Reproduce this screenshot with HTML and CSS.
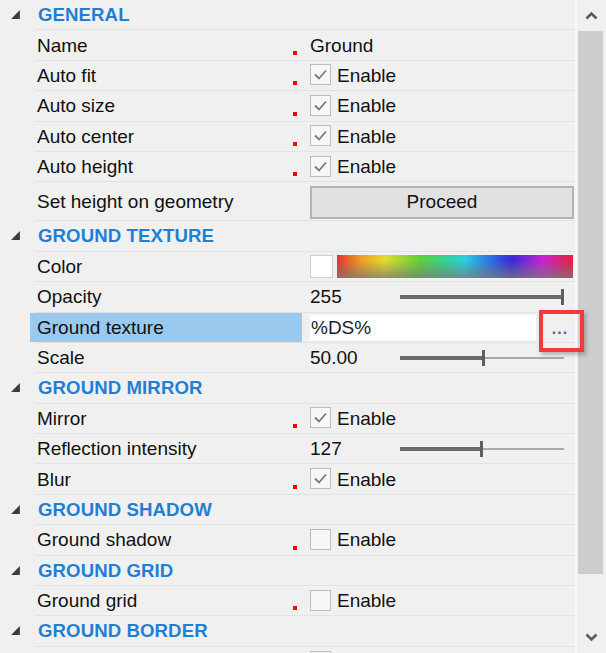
FILE: index.html
```html
<!DOCTYPE html>
<html>
<head>
<meta charset="utf-8">
<link rel="stylesheet" href="styles.css">
</head>
<body>
<div class="panel">
  <div class="content">
    <div class="row head"><div class="gutter"><svg class="tri" width="10" height="10" viewBox="0 0 10 10"><polygon points="9,1 9,9 1,9"/></svg></div><div class="cells"><span class="htext">GENERAL</span></div></div>
    <div class="row"><div class="gutter"></div><div class="cells"><div class="label"><span>Name</span><i class="mark"></i></div><div class="value">Ground</div></div></div>
    <div class="row"><div class="gutter"></div><div class="cells"><div class="label"><span>Auto fit</span><i class="mark"></i></div><div class="value"><span class="cb"><svg viewBox="0 0 21 21" width="21" height="21"><polyline points="5,10.5 9,14.5 16,6.5"/></svg></span><span class="cbl">Enable</span></div></div></div>
    <div class="row"><div class="gutter"></div><div class="cells"><div class="label"><span>Auto size</span><i class="mark"></i></div><div class="value"><span class="cb"><svg viewBox="0 0 21 21" width="21" height="21"><polyline points="5,10.5 9,14.5 16,6.5"/></svg></span><span class="cbl">Enable</span></div></div></div>
    <div class="row"><div class="gutter"></div><div class="cells"><div class="label"><span>Auto center</span><i class="mark"></i></div><div class="value"><span class="cb"><svg viewBox="0 0 21 21" width="21" height="21"><polyline points="5,10.5 9,14.5 16,6.5"/></svg></span><span class="cbl">Enable</span></div></div></div>
    <div class="row"><div class="gutter"></div><div class="cells"><div class="label"><span>Auto height</span><i class="mark"></i></div><div class="value"><span class="cb"><svg viewBox="0 0 21 21" width="21" height="21"><polyline points="5,10.5 9,14.5 16,6.5"/></svg></span><span class="cbl">Enable</span></div></div></div>
    <div class="row tall"><div class="gutter"></div><div class="cells"><div class="label"><span>Set height on geometry</span></div><div class="value"><button class="proceed">Proceed</button></div></div></div>

    <div class="row head"><div class="gutter"><svg class="tri" width="10" height="10" viewBox="0 0 10 10"><polygon points="9,1 9,9 1,9"/></svg></div><div class="cells"><span class="htext">GROUND TEXTURE</span></div></div>
    <div class="row"><div class="gutter"></div><div class="cells"><div class="label"><span>Color</span></div><div class="value"><span class="swatch"></span><span class="spectrum"></span></div></div></div>
    <div class="row"><div class="gutter"></div><div class="cells"><div class="label"><span>Opacity</span></div><div class="value"><span class="num">255</span><span class="slider"><span class="fill" style="width:161px"></span><span class="thumb"></span><span class="rest"></span></span></div></div></div>
    <div class="row"><div class="gutter"></div><div class="cells"><div class="label selected"><span>Ground texture</span></div><div class="value"><span class="textbox">%DS%</span><span class="browse">...<span class="callout"></span></span></div></div></div>
    <div class="row"><div class="gutter"></div><div class="cells"><div class="label"><span>Scale</span></div><div class="value"><span class="num">50.00</span><span class="slider"><span class="fill" style="width:82px"></span><span class="thumb"></span><span class="rest"></span></span></div></div></div>

    <div class="row head"><div class="gutter"><svg class="tri" width="10" height="10" viewBox="0 0 10 10"><polygon points="9,1 9,9 1,9"/></svg></div><div class="cells"><span class="htext">GROUND MIRROR</span></div></div>
    <div class="row"><div class="gutter"></div><div class="cells"><div class="label"><span>Mirror</span><i class="mark"></i></div><div class="value"><span class="cb"><svg viewBox="0 0 21 21" width="21" height="21"><polyline points="5,10.5 9,14.5 16,6.5"/></svg></span><span class="cbl">Enable</span></div></div></div>
    <div class="row"><div class="gutter"></div><div class="cells"><div class="label"><span>Reflection intensity</span></div><div class="value"><span class="num">127</span><span class="slider"><span class="fill" style="width:80px"></span><span class="thumb"></span><span class="rest"></span></span></div></div></div>
    <div class="row"><div class="gutter"></div><div class="cells"><div class="label"><span>Blur</span><i class="mark"></i></div><div class="value"><span class="cb"><svg viewBox="0 0 21 21" width="21" height="21"><polyline points="5,10.5 9,14.5 16,6.5"/></svg></span><span class="cbl">Enable</span></div></div></div>

    <div class="row head"><div class="gutter"><svg class="tri" width="10" height="10" viewBox="0 0 10 10"><polygon points="9,1 9,9 1,9"/></svg></div><div class="cells"><span class="htext">GROUND SHADOW</span></div></div>
    <div class="row"><div class="gutter"></div><div class="cells"><div class="label"><span>Ground shadow</span><i class="mark"></i></div><div class="value"><span class="cb"></span><span class="cbl">Enable</span></div></div></div>

    <div class="row head"><div class="gutter"><svg class="tri" width="10" height="10" viewBox="0 0 10 10"><polygon points="9,1 9,9 1,9"/></svg></div><div class="cells"><span class="htext">GROUND GRID</span></div></div>
    <div class="row"><div class="gutter"></div><div class="cells"><div class="label"><span>Ground grid</span><i class="mark"></i></div><div class="value"><span class="cb"></span><span class="cbl">Enable</span></div></div></div>

    <div class="row head"><div class="gutter"><svg class="tri" width="10" height="10" viewBox="0 0 10 10"><polygon points="9,1 9,9 1,9"/></svg></div><div class="cells"><span class="htext">GROUND BORDER</span></div></div>
    <div class="row"><div class="gutter"></div><div class="cells"><div class="label"></div><div class="value"><span class="cb"></span></div></div></div>
  </div>
  <div class="scrollbar">
    <div class="sb-btn"><svg width="13" height="9" viewBox="0 0 13 9"><polyline points="1.5,7.5 6.5,2.5 11.5,7.5"/></svg></div>
    <div class="sb-track"><div class="sb-thumb"></div></div>
    <div class="sb-btn down"><svg width="13" height="9" viewBox="0 0 13 9"><polyline points="1.5,1.5 6.5,6.5 11.5,1.5"/></svg></div>
  </div>
</div>
</body>
</html>
```
FILE: styles.css
```css
* { box-sizing: border-box; }
html, body {
  margin: 0;
  padding: 0;
}
body {
  width: 606px;
  height: 653px;
  overflow: hidden;
  background: #f0f0f0;
  font-family: "Liberation Sans", Arial, sans-serif;
  font-size: 19px;
  color: #111111;
}
.panel {
  display: flex;
  height: 653px;
  overflow: hidden;
}
.content {
  width: 575px;
  flex: none;
  position: relative;
  z-index: 1;
}
.row {
  display: flex;
  height: 30.4px;
}
.row.tall { height: 39px; }
.gutter {
  width: 35px;
  flex: none;
  padding: 9px 0 0 10px;
}
.tri { display: block; width: 11px; height: 11px; }
.tri polygon { fill: #3c3c3c; }
.cells {
  flex: 1;
  display: grid;
  grid-template-columns: 273px 1fr;
  border-bottom: 1px solid #e2e2e2;
}
.htext {
  grid-column: 1 / 3;
  font-weight: bold;
  font-size: 18.6px;
  color: #1f7fd6;
  line-height: 29.4px;
  padding-left: 3px;
  letter-spacing: 0.1px;
}
.label {
  display: flex;
  align-items: center;
  padding-left: 2px;
  line-height: 20px;
  padding-top: 1px;
  white-space: nowrap;
}
.label.selected {
  background: #99c9ee;
  margin-left: -5px;
  margin-right: 6px;
  padding-left: 7px;
}
.mark {
  display: block;
  width: 4px;
  height: 4px;
  background: #f00000;
  margin-left: auto;
  margin-right: 11px;
  align-self: flex-end;
  margin-bottom: 5px;
}
.value {
  display: flex;
  align-items: center;
  padding-left: 2px;
  padding-top: 1px;
  white-space: nowrap;
}
.cb {
  width: 21px;
  height: 21px;
  border: 1px solid #bcbcbc;
  background: #f7f7f7;
  flex: none;
  position: relative;
  top: -1px;
}
.cb svg { display: block; margin: -1px; }
.cb polyline {
  fill: none;
  stroke: #7a7a7a;
  stroke-width: 1.8;
}
.cbl { margin-left: 6px; }
.proceed {
  width: 264px;
  height: 33px;
  background: #e1e1e1;
  border: 2px solid #b4b4b4;
  font-family: inherit;
  font-size: 19px;
  color: #111111;
  padding: 0;
  margin-top: 1px;
}
.swatch {
  width: 23px;
  height: 23px;
  background: #ffffff;
  border: 1px solid #cfcfcf;
  flex: none;
}
.spectrum {
  width: 236px;
  height: 23px;
  margin-left: 4px;
  background:
    linear-gradient(to bottom, rgba(140,140,140,0) 25%, rgba(120,120,120,0.75) 100%),
    linear-gradient(to right, #e4332e 0%, #f09a25 10%, #e6d92a 20%, #5fd03a 35%, #2ed2a6 48%, #2bcfe0 54%, #2d58e0 68%, #3a2ad8 74%, #c424d4 87%, #e8203a 100%);
}
.num {
  width: 90px;
  flex: none;
}
.slider {
  display: flex;
  align-items: center;
  width: 164px;
  height: 20px;
}
.fill {
  height: 4px;
  background: #6a6a6a;
  flex: none;
}
.thumb {
  width: 3px;
  height: 16px;
  background: #5e5e5e;
  flex: none;
}
.rest {
  flex: 1;
  height: 2px;
  background: #a8a8a8;
}
.textbox {
  width: 226px;
  height: 25px;
  background: #ffffff;
  line-height: 25px;
  padding-left: 1px;
  flex: none;
  color: #1c1c2c;
}
.browse {
  position: relative;
  margin-left: 5px;
  width: 34px;
  height: 28px;
  line-height: 30px;
  text-align: center;
  font-size: 16px;
  font-weight: bold;
  color: #6a5a94;
  letter-spacing: 1px;
  padding-left: 4px;
}
.callout {
  position: absolute;
  left: -2px;
  top: -4px;
  width: 45px;
  height: 42px;
  border: 4px solid #ee3b3d;
  box-shadow: 2px 3px 4px rgba(0,0,0,0.25);
}
.scrollbar {
  width: 31px;
  flex: none;
  display: flex;
  flex-direction: column;
  background: #f0f0f0;
  box-shadow: inset 2px 0 0 #f8f8f8;
}
.sb-btn {
  height: 31px;
  flex: none;
  display: flex;
  align-items: center;
  justify-content: center;
  padding-left: 2px;
}
.sb-btn.down { height: 32px; }
.sb-btn polyline {
  fill: none;
  stroke: #5a5a5a;
  stroke-width: 2.6;
}
.sb-track {
  flex: 1;
  padding: 0 3px;
}
.sb-thumb {
  height: 543px;
  background: #cdcdcd;
}
```
